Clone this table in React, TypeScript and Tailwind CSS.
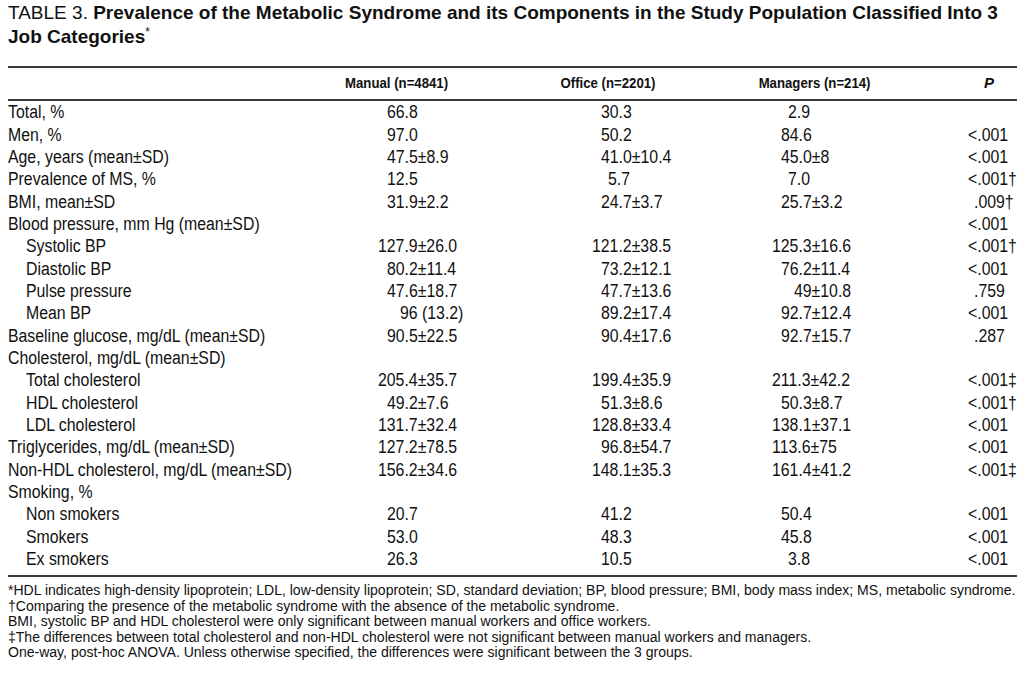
import React from 'react';

// each value carries its own left pad so figures line up on the decimal / ± sign
type Row = {
  label: string;
  sub?: boolean;
  m?: [string, string];
  o?: [string, string];
  g?: [string, string];
  p?: [string, string];
};

const P3 = 'pl-0';
const P2 = 'pl-[9px]';
const P1 = 'pl-[16px]';
const PL = 'pl-0';
const PD = 'pl-[6px]';

const rows: Row[] = [
  { label: 'Total, %', m: ['66.8', P2], o: ['30.3', P2], g: ['2.9', P1] },
  { label: 'Men, %', m: ['97.0', P2], o: ['50.2', P2], g: ['84.6', P2], p: ['<.001', PL] },
  { label: 'Age, years (mean±SD)', m: ['47.5±8.9', P2], o: ['41.0±10.4', P2], g: ['45.0±8', P2], p: ['<.001', PL] },
  { label: 'Prevalence of MS, %', m: ['12.5', P2], o: ['5.7', P1], g: ['7.0', P1], p: ['<.001†', PL] },
  { label: 'BMI, mean±SD', m: ['31.9±2.2', P2], o: ['24.7±3.7', P2], g: ['25.7±3.2', P2], p: ['.009†', PD] },
  { label: 'Blood pressure, mm Hg (mean±SD)', p: ['<.001', PL] },
  { label: 'Systolic BP', sub: true, m: ['127.9±26.0', P3], o: ['121.2±38.5', P3], g: ['125.3±16.6', P3], p: ['<.001†', PL] },
  { label: 'Diastolic BP', sub: true, m: ['80.2±11.4', P2], o: ['73.2±12.1', P2], g: ['76.2±11.4', P2], p: ['<.001', PL] },
  { label: 'Pulse pressure', sub: true, m: ['47.6±18.7', P2], o: ['47.7±13.6', P2], g: ['49±10.8', 'pl-[22px]'], p: ['.759', PD] },
  { label: 'Mean BP', sub: true, m: ['96 (13.2)', 'pl-[22px]'], o: ['89.2±17.4', P2], g: ['92.7±12.4', P2], p: ['<.001', PL] },
  { label: 'Baseline glucose, mg/dL (mean±SD)', m: ['90.5±22.5', P2], o: ['90.4±17.6', P2], g: ['92.7±15.7', P2], p: ['.287', PD] },
  { label: 'Cholesterol, mg/dL (mean±SD)' },
  { label: 'Total cholesterol', sub: true, m: ['205.4±35.7', P3], o: ['199.4±35.9', P3], g: ['211.3±42.2', P3], p: ['<.001‡', PL] },
  { label: 'HDL cholesterol', sub: true, m: ['49.2±7.6', P2], o: ['51.3±8.6', P2], g: ['50.3±8.7', P2], p: ['<.001†', PL] },
  { label: 'LDL cholesterol', sub: true, m: ['131.7±32.4', P3], o: ['128.8±33.4', P3], g: ['138.1±37.1', P3], p: ['<.001', PL] },
  { label: 'Triglycerides, mg/dL (mean±SD)', m: ['127.2±78.5', P3], o: ['96.8±54.7', P2], g: ['113.6±75', P3], p: ['<.001', PL] },
  { label: 'Non-HDL cholesterol, mg/dL (mean±SD)', m: ['156.2±34.6', P3], o: ['148.1±35.3', P3], g: ['161.4±41.2', P3], p: ['<.001‡', PL] },
  { label: 'Smoking, %' },
  { label: 'Non smokers', sub: true, m: ['20.7', P2], o: ['41.2', P2], g: ['50.4', P2], p: ['<.001', PL] },
  { label: 'Smokers', sub: true, m: ['53.0', P2], o: ['48.3', P2], g: ['45.8', P2], p: ['<.001', PL] },
  { label: 'Ex smokers', sub: true, m: ['26.3', P2], o: ['10.5', P2], g: ['3.8', P1], p: ['<.001', PL] },
];

const notes = [
  '*HDL indicates high-density lipoprotein; LDL, low-density lipoprotein; SD, standard deviation; BP, blood pressure; BMI, body mass index; MS, metabolic syndrome.',
  '†Comparing the presence of the metabolic syndrome with the absence of the metabolic syndrome.',
  'BMI, systolic BP and HDL cholesterol were only significant between manual workers and office workers.',
  '‡The differences between total cholesterol and non-HDL cholesterol were not significant between manual workers and managers.',
  'One-way, post-hoc ANOVA. Unless otherwise specified, the differences were significant between the 3 groups.',
];

// Helvetica Narrow look: Arial metrics squeezed horizontally
function N({ children, center, wide }: { children: React.ReactNode; center?: boolean; wide?: boolean }) {
  return (
    <span
      className={`inline-block whitespace-nowrap ${wide ? 'scale-x-[0.905]' : 'scale-x-[0.88]'} ${
        center ? 'origin-center' : 'origin-left'
      }`}
    >
      {children}
    </span>
  );
}

function Cell({ v, w }: { v?: [string, string]; w: string }) {
  return (
    <div className={`${w} shrink-0 ${v ? v[1] : ''}`}>
      {v && <N>{v[0]}</N>}
    </div>
  );
}

export default function App() {
  return (
    <div className="w-[1024px] h-[674px] bg-white text-[#111] overflow-hidden font-['Liberation_Sans',Arial,sans-serif]">
      {/* 제목 */}
      <div className="w-[1016px] pl-[8px] pt-[1px] text-[19px] leading-[24px]">
        <div>
          TABLE 3. <span className="font-bold">Prevalence of the Metabolic Syndrome and its Components in the Study Population Classified Into 3</span>
        </div>
        <div className="font-bold">
          Job Categories<span className="align-top text-[12px] font-normal leading-[14px]">*</span>
        </div>
      </div>

      <div className="mx-[8px] mt-[17px] w-[1009px]">
        <div className="h-[2px] bg-[#3a3a3a]" />
        {/* 헤더 */}
        <div className="flex h-[31px] items-center text-[15px] font-bold">
          <div className="w-[330px] shrink-0" />
          <div className="w-[110px] shrink-0 text-center"><N center>Manual (n=4841)</N></div>
          <div className="w-[105px] shrink-0" />
          <div className="w-[110px] shrink-0 text-center"><N center>Office (n=2201)</N></div>
          <div className="w-[88px] shrink-0" />
          <div className="w-[116px] shrink-0 text-center"><N center>Managers (n=214)</N></div>
          <div className="flex-1 pl-[117px] italic">P</div>
        </div>
        <div className="h-[2px] bg-[#3a3a3a]" />

        {/* 본문 */}
        <div className="text-[18px] leading-[20px]">
          {rows.map((r) => (
            <div key={r.label} className="flex h-[22.35px] items-center">
              <div className={`w-[370px] shrink-0 ${r.sub ? 'pl-[18px]' : ''}`}><N>{r.label}</N></div>
              <Cell v={r.m} w="w-[214px]" />
              <Cell v={r.o} w="w-[180px]" />
              <Cell v={r.g} w="w-[196px]" />
              <Cell v={r.p} w="flex-1" />
            </div>
          ))}
        </div>
        <div className="mt-[5px] h-[2px] bg-[#3a3a3a]" />

        {/* 각주 */}
        <div className="mt-[5px] text-[15.5px] leading-[15.5px]">
          {notes.map((n) => (
            <div key={n}><N wide>{n}</N></div>
          ))}
        </div>
      </div>
    </div>
  );
}
